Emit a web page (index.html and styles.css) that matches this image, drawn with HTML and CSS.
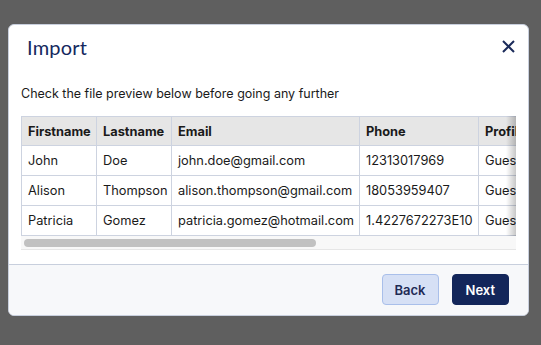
FILE: index.html
```html
<!DOCTYPE html>
<html lang="en">
<head>
    <meta charset="UTF-8">
    <meta name="viewport" content="width=device-width, initial-scale=1.0">
    <title>Import</title>
    <link rel="stylesheet" href="styles.css">
</head>
<body>
    <div class="modal">
        <div class="modal-header">
            <h1>Import</h1>
            <button class="close" aria-label="Close">
                <svg width="13" height="13" viewBox="0 0 13 13">
                    <path d="M1 1 L12 12 M12 1 L1 12" stroke="#1b2b5a" stroke-width="2" fill="none"/>
                </svg>
            </button>
        </div>
        <div class="modal-body">
            <p class="hint">Check the file preview below before going any further</p>
            <div class="preview">
                <div class="scroller">
                    <table>
                        <thead>
                            <tr>
                                <th class="c-first">Firstname</th>
                                <th class="c-last">Lastname</th>
                                <th class="c-email">Email</th>
                                <th class="c-phone">Phone</th>
                                <th class="c-profile">Profile</th>
                                <th class="c-company">Company</th>
                                <th>Address</th>
                            </tr>
                        </thead>
                        <tbody>
                            <tr>
                                <td>John</td>
                                <td>Doe</td>
                                <td>john.doe@gmail.com</td>
                                <td>12313017969</td>
                                <td>Guest</td>
                                <td>Acme</td>
                                <td>12 Main Street</td>
                            </tr>
                            <tr>
                                <td>Alison</td>
                                <td>Thompson</td>
                                <td>alison.thompson@gmail.com</td>
                                <td>18053959407</td>
                                <td>Guest</td>
                                <td>Globex</td>
                                <td>4 Oak Avenue</td>
                            </tr>
                            <tr>
                                <td>Patricia</td>
                                <td>Gomez</td>
                                <td>patricia.gomez@hotmail.com</td>
                                <td>1.4227672273E10</td>
                                <td>Guest</td>
                                <td>Initech</td>
                                <td>88 Pine Road</td>
                            </tr>
                        </tbody>
                    </table>
                </div>
                <div class="fade"></div>
                <!-- horizontal scrollbar, drawn by hand -->
                <div class="scrollbar">
                    <div class="thumb" style="width: 292px"></div>
                </div>
            </div>
        </div>
        <div class="modal-footer">
            <button class="btn btn-back">Back</button>
            <button class="btn btn-next">Next</button>
        </div>
    </div>
</body>
</html>
```

FILE: styles.css
```css
body {
    margin: 0;
    background: #5f5f5f;
    font-family: Inter, "Liberation Sans", sans-serif;
    height: 345px;
    overflow: hidden;
}
.modal {
    width: 521px;
    margin: 24px 0 0 8px;
    background: #fff;
    border-radius: 6px;
    overflow: hidden;
    border: 1px solid #c8cfdd;
    box-sizing: border-box;
}
.modal-header {
    display: flex;
    justify-content: space-between;
    align-items: center;
    height: 47px;
    padding: 0 13px 0 18px;
}
.modal-header h1 {
    margin: 0;
    margin-top: -4px;
    font-family: Lato, "Open Sans", sans-serif;
    font-weight: 400;
    font-size: 20px;
    color: #14285e;
    letter-spacing: 0.2px;
}
.close {
    background: none;
    border: 0;
    padding: 0;
    width: 13px;
    height: 13px;
    cursor: pointer;
    display: flex;
    margin-top: -4px;
}
.modal-body {
    padding: 0 12px 14px 12px;
}
.hint {
    margin: 13px 0 14px;
    font-size: 12.5px;
    color: #1a1a1a;
    line-height: 17px;
}
.preview {
    position: relative;
    width: 495px;
}
.scroller {
    overflow: hidden;
}
.fade {
    position: absolute;
    top: 0;
    right: 0;
    width: 10px;
    height: 120px;
    background: linear-gradient(to right, rgba(0,0,0,0), rgba(0,0,0,0.22));
}
.scrollbar {
    height: 14px;
    background: #f8f8f8;
    border-bottom: 1px solid #e6e6e6;
    padding: 3px;
    box-sizing: border-box;
}
.thumb {
    height: 8px;
    background: #c1c1c1;
    border-radius: 4px;
}
table {
    border-collapse: collapse;
    width: 839px;
    table-layout: fixed;
    font-size: 12.8px;
    color: #1a1a1a;
}
th, td {
    border: 1px solid #cdd3e0;
    padding: 0 6px;
    height: 30px;
    text-align: left;
    white-space: nowrap;
    overflow: hidden;
    box-sizing: border-box;
}
th {
    background: #e6e6e6;
    font-weight: 700;
    height: 29px;
}
.c-first { width: 75px; }
.c-last { width: 75px; }
.c-email { width: 188px; }
.c-phone { width: 119px; }
.c-profile { width: 110px; }
.c-company { width: 110px; }
.modal-footer {
    display: flex;
    justify-content: flex-end;
    gap: 13px;
    height: 51px;
    padding: 9px 19px 0 0;
    box-sizing: border-box;
    background: #f7f8fa;
    border-top: 1px solid #c8cfdd;
}
.btn {
    height: 31px;
    padding: 0 12px;
    border-radius: 4px;
    font-family: Inter, "Liberation Sans", sans-serif;
    font-size: 13px;
    font-weight: 600;
    cursor: pointer;
}
.btn-back {
    background: #d6e0f5;
    border: 1px solid #a9bfea;
    color: #1e2b55;
}
.btn-next {
    background: #13265a;
    border: 1px solid #13265a;
    color: #fff;
    padding: 0 13px;
}
```
